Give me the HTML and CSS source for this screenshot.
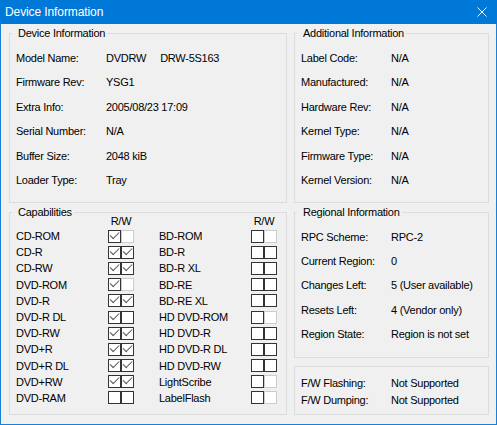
FILE: index.html
```html
<!DOCTYPE html>
<html>
<head>
  <title>Device Information</title>
  <link rel="stylesheet" href="styles.css">
</head>
<body>
<div class="window">
  <div class="titlebar">
    <span>Device Information</span>
    <svg class="close" width="10" height="10" viewBox="0 0 10 10">
      <path d="M0.5 0.5 L9.5 9.5 M9.5 0.5 L0.5 9.5" stroke="#fff" stroke-width="1" fill="none"/>
    </svg>
  </div>

  <div class="client">
    <div class="col">
      <div class="group info">
        <div class="legend">Device Information</div>
        <div class="fields">
          <span>Model Name:</span><span class="pre">DVDRW     DRW-5S163</span>
          <span>Firmware Rev:</span><span>YSG1</span>
          <span>Extra Info:</span><span>2005/08/23 17:09</span>
          <span>Serial Number:</span><span>N/A</span>
          <span>Buffer Size:</span><span>2048 kiB</span>
          <span>Loader Type:</span><span>Tray</span>
        </div>
      </div>

      <div class="group caps">
        <div class="legend">Capabilities</div>
        <div class="caps-grid">
          <span></span><span class="rwhead">R/W</span><span></span><span class="rwhead">R/W</span>

          <span>CD-ROM</span><span class="rw"><i class="on"></i><i class="dis"></i></span>
          <span>BD-ROM</span><span class="rw"><i></i><i class="dis"></i></span>

          <span>CD-R</span><span class="rw"><i class="on"></i><i class="on"></i></span>
          <span>BD-R</span><span class="rw"><i></i><i></i></span>

          <span>CD-RW</span><span class="rw"><i class="on"></i><i class="on"></i></span>
          <span>BD-R XL</span><span class="rw"><i></i><i></i></span>

          <span>DVD-ROM</span><span class="rw"><i class="on"></i><i class="dis"></i></span>
          <span>BD-RE</span><span class="rw"><i></i><i></i></span>

          <span>DVD-R</span><span class="rw"><i class="on"></i><i class="on"></i></span>
          <span>BD-RE XL</span><span class="rw"><i></i><i></i></span>

          <span>DVD-R DL</span><span class="rw"><i class="on"></i><i></i></span>
          <span>HD DVD-ROM</span><span class="rw"><i></i><i class="dis"></i></span>

          <span>DVD-RW</span><span class="rw"><i class="on"></i><i class="on"></i></span>
          <span>HD DVD-R</span><span class="rw"><i></i><i></i></span>

          <span>DVD+R</span><span class="rw"><i class="on"></i><i class="on"></i></span>
          <span>HD DVD-R DL</span><span class="rw"><i></i><i></i></span>

          <span>DVD+R DL</span><span class="rw"><i class="on"></i><i class="on"></i></span>
          <span>HD DVD-RW</span><span class="rw"><i></i><i></i></span>

          <span>DVD+RW</span><span class="rw"><i class="on"></i><i class="on"></i></span>
          <span>LightScribe</span><span class="rw"><i></i><i class="dis"></i></span>

          <span>DVD-RAM</span><span class="rw"><i></i><i></i></span>
          <span>LabelFlash</span><span class="rw"><i></i><i class="dis"></i></span>
        </div>
      </div>
    </div>

    <div class="col">
      <div class="group info">
        <div class="legend">Additional Information</div>
        <div class="fields">
          <span>Label Code:</span><span>N/A</span>
          <span>Manufactured:</span><span>N/A</span>
          <span>Hardware Rev:</span><span>N/A</span>
          <span>Kernel Type:</span><span>N/A</span>
          <span>Firmware Type:</span><span>N/A</span>
          <span>Kernel Version:</span><span>N/A</span>
        </div>
      </div>

      <div class="group region">
        <div class="legend">Regional Information</div>
        <div class="fields">
          <span>RPC Scheme:</span><span>RPC-2</span>
          <span>Current Region:</span><span>0</span>
          <span>Changes Left:</span><span>5 (User available)</span>
          <span>Resets Left:</span><span>4 (Vendor only)</span>
          <span>Region State:</span><span>Region is not set</span>
        </div>
      </div>

      <div class="group flash">
        <div class="fields">
          <span>F/W Flashing:</span><span>Not Supported</span>
          <span>F/W Dumping:</span><span>Not Supported</span>
        </div>
      </div>
    </div>
  </div>
</div>
</body>
</html>
```

FILE: styles.css
```css
body{
  margin: 0;
  font-family: "Liberation Sans", Arial, sans-serif;
  font-size: 11px;
  letter-spacing: -0.25px;
  color: #000;
}

.window{
  width: 497px;
  height: 425px;
  box-sizing: border-box;
  border: 1px solid #1a7fd6;
  border-top: 0;
  background: #f0f0f0;
  display: flex;
  flex-direction: column;
}

.titlebar{
  height: 24px;
  margin: 0 -1px;
  padding: 0 10px 0 5px;
  background: #0078d7;
  color: #fff;
  font-size: 12px;
  letter-spacing: -0.1px;
  display: flex;
  align-items: center;
  justify-content: space-between;
}

.close{
  display: block;
}

.client{
  display: flex;
  gap: 7px;
  padding: 9px 7px 0 8px;
}

.col{
  display: flex;
  flex-direction: column;
}

.col:first-child{ width: 278px; }
.col:last-child{ width: 195px; }

.group{
  border: 1px solid #dcdcdc;
  box-sizing: border-box;
}

.info{ height: 170px; }
.caps{ height: 203px; margin-top: 9px; }
.region{ height: 146px; margin-top: 9px; }
.flash{ height: 49px; margin-top: 8px; }

.legend{
  width: max-content;
  margin: -8px 0 0 2px;
  padding: 0 2px 0 6px;
  line-height: 14px;
  background: #f0f0f0;
}

.fields{
  display: grid;
  grid-template-columns: 90px auto;
  grid-auto-rows: 24.4px;
  align-items: center;
  margin-top: 5.8px;
  padding-left: 6px;
}

.region .fields{ grid-auto-rows: 24.25px; }
.flash .fields{ grid-auto-rows: 17px; margin-top: 7.5px; }

.pre{ white-space: pre; }

/* capabilities table */
.caps-grid{
  display: grid;
  grid-template-columns: 92px 51px 92px 26px;
  grid-template-rows: 14px;
  grid-auto-rows: 16.2px;
  align-items: center;
  margin-top: -5px;
  padding-left: 6px;
}

.rwhead{
  width: 26px;
  text-align: center;
  line-height: 14px;
}

.rw{
  display: flex;
  height: 13px;
}

.rw i{
  display: block;
  position: relative;
  width: 11px;
  height: 11px;
  border: 1px solid #333;
  background: #fff;
}

.rw i.dis{
  border-color: #cccccc;
}

.rw i.on::after{
  content: "";
  position: absolute;
  left: 1px;
  top: 1px;
  width: 7.5px;
  height: 3.5px;
  border-left: 1.2px solid #555;
  border-bottom: 1.2px solid #555;
  transform: rotate(-45deg);
}
```
